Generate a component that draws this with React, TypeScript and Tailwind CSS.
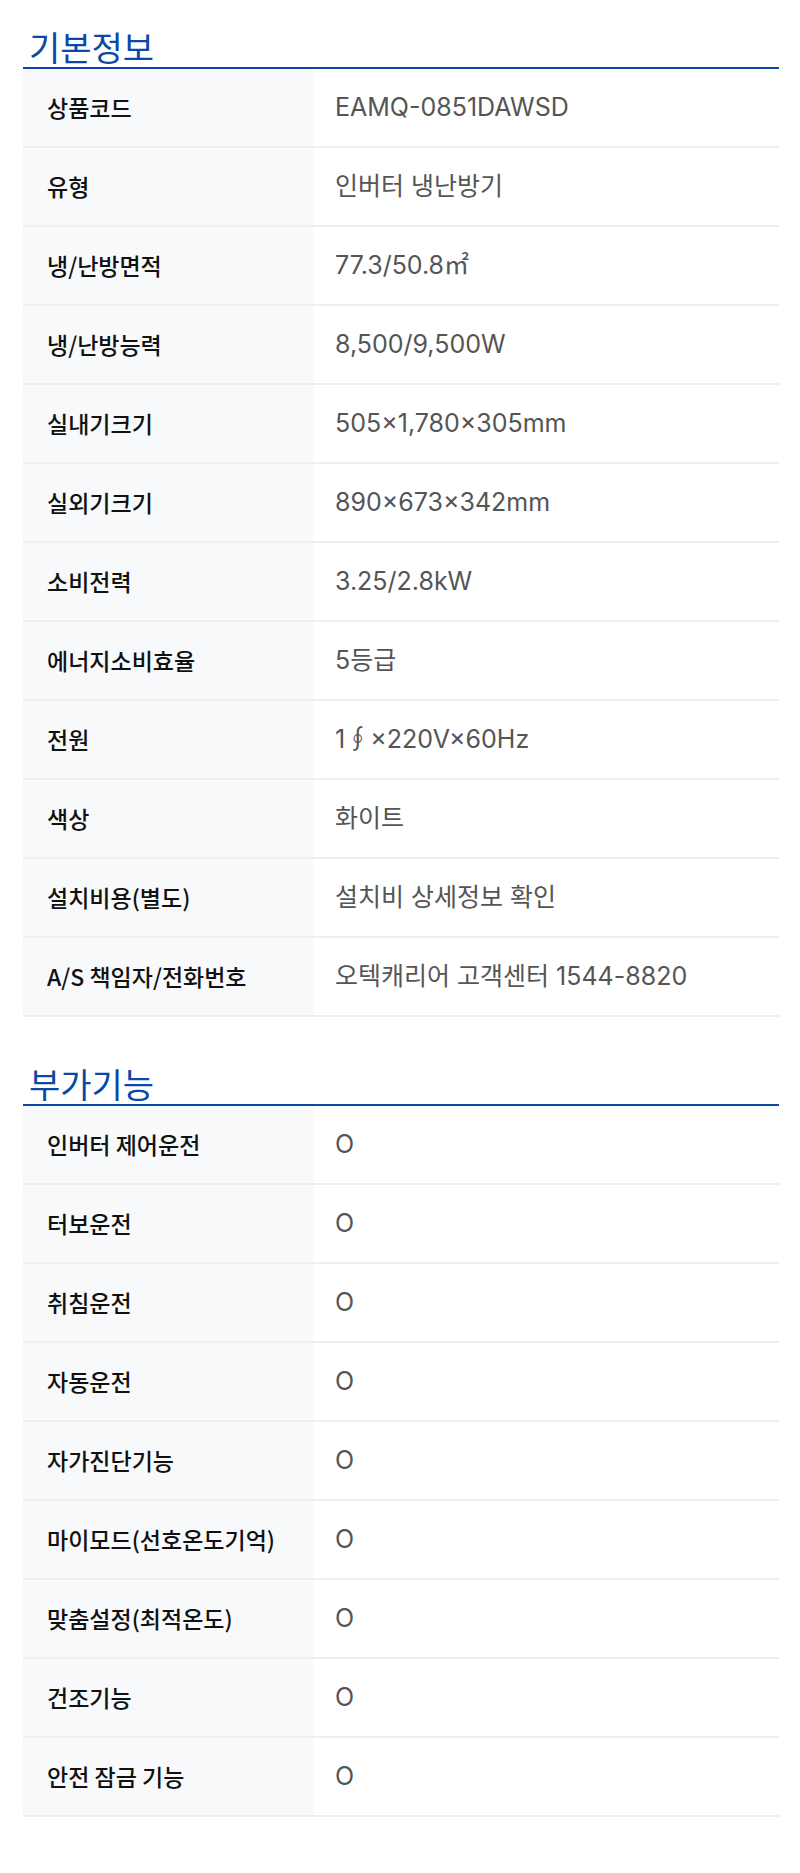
import React from 'react'

interface Spec {
  label: string
  value: string
}

const basicInfo: Spec[] = [
  { label: '상품코드', value: 'EAMQ-0851DAWSD' },
  { label: '유형', value: '인버터 냉난방기' },
  { label: '냉/난방면적', value: '77.3/50.8㎡' },
  { label: '냉/난방능력', value: '8,500/9,500W' },
  { label: '실내기크기', value: '505×1,780×305mm' },
  { label: '실외기크기', value: '890×673×342mm' },
  { label: '소비전력', value: '3.25/2.8kW' },
  { label: '에너지소비효율', value: '5등급' },
  { label: '전원', value: '1∮×220V×60Hz' },
  { label: '색상', value: '화이트' },
  { label: '설치비용(별도)', value: '설치비 상세정보 확인' },
  { label: 'A/S 책임자/전화번호', value: '오텍캐리어 고객센터 1544-8820' },
]

const extraFeatures: Spec[] = [
  { label: '인버터 제어운전', value: 'O' },
  { label: '터보운전', value: 'O' },
  { label: '취침운전', value: 'O' },
  { label: '자동운전', value: 'O' },
  { label: '자가진단기능', value: 'O' },
  { label: '마이모드(선호온도기억)', value: 'O' },
  { label: '맞춤설정(최적온도)', value: 'O' },
  { label: '건조기능', value: 'O' },
  { label: '안전 잠금 기능', value: 'O' },
]

// ─── 섹션 (제목 + 표) ─────────────────────────────────────────────
const SpecSection = ({ title, rows, className = '' }: { title: string; rows: Spec[]; className?: string }) => (
  <section className={className}>
    <h2 className="h-[69px] flex items-end pl-[6px] border-b-2 border-[#0b48a8] text-[34px] leading-[40px] text-[#0b48a8] font-['Noto_Sans_CJK_KR',sans-serif]">
      {title}
    </h2>
    <div>
      {rows.map((row, i) => (
        <div key={i} className="flex h-[79px] border-b-2 border-[#eeeeee]">
          <div className="w-[290px] shrink-0 bg-[#f8f9fb] flex items-center pl-6 text-[23px] font-medium text-[#111111] font-['Noto_Sans_CJK_KR',sans-serif]">
            {row.label}
          </div>
          <div className="flex-1 flex items-center pl-[22px] text-[25px] text-[#555555] font-['Inter','Noto_Sans_CJK_KR',sans-serif]">
            {row.value}
          </div>
        </div>
      ))}
    </div>
  </section>
)

export default function App() {
  return (
    <div className="w-[800px] h-[1873px] bg-white">
      <div className="ml-[23px] w-[756px]">
        <SpecSection title="기본정보" rows={basicInfo} />
        <SpecSection title="부가기능" rows={extraFeatures} className="mt-5" />
      </div>
    </div>
  )
}
